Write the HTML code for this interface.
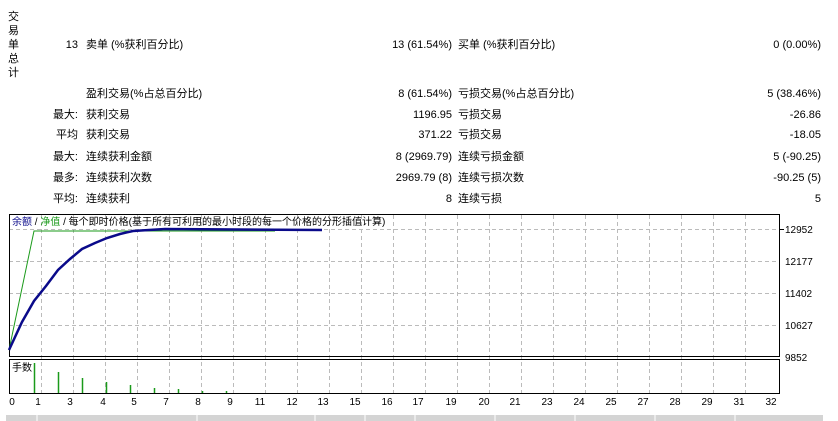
<!DOCTYPE html>
<html><head><meta charset="utf-8"><style>
body{margin:0;width:838px;height:421px;background:#fff;font-family:"Liberation Sans","Noto Sans CJK SC",sans-serif;font-size:11px;color:#000;position:relative;overflow:hidden}
.t{position:absolute;white-space:nowrap;line-height:13px}
.r{text-align:right}
</style></head><body>
<div class="t" style="left:8px;top:10px;width:12px;line-height:14px;font-size:11px">交<br>易<br>单<br>总<br>计</div>

<div class="t r" style="right:760px;top:39px">13</div>
<div class="t" style="left:86px;top:39px">卖单 (%获利百分比)</div>
<div class="t r" style="right:386px;top:39px">13 (61.54%)</div>
<div class="t" style="left:458px;top:39px">买单 (%获利百分比)</div>
<div class="t r" style="right:17px;top:39px">0 (0.00%)</div>

<div class="t" style="left:86px;top:88px">盈利交易(%占总百分比)</div>
<div class="t r" style="right:386px;top:88px">8 (61.54%)</div>
<div class="t" style="left:458px;top:88px">亏损交易(%占总百分比)</div>
<div class="t r" style="right:17px;top:88px">5 (38.46%)</div>

<div class="t r" style="right:760px;top:109px">最大:</div>
<div class="t" style="left:86px;top:109px">获利交易</div>
<div class="t r" style="right:386px;top:109px">1196.95</div>
<div class="t" style="left:458px;top:109px">亏损交易</div>
<div class="t r" style="right:17px;top:109px">-26.86</div>

<div class="t r" style="right:760px;top:129px">平均</div>
<div class="t" style="left:86px;top:129px">获利交易</div>
<div class="t r" style="right:386px;top:129px">371.22</div>
<div class="t" style="left:458px;top:129px">亏损交易</div>
<div class="t r" style="right:17px;top:129px">-18.05</div>

<div class="t r" style="right:760px;top:151px">最大:</div>
<div class="t" style="left:86px;top:151px">连续获利金额</div>
<div class="t r" style="right:386px;top:151px">8 (2969.79)</div>
<div class="t" style="left:458px;top:151px">连续亏损金额</div>
<div class="t r" style="right:17px;top:151px">5 (-90.25)</div>

<div class="t r" style="right:760px;top:172px">最多:</div>
<div class="t" style="left:86px;top:172px">连续获利次数</div>
<div class="t r" style="right:386px;top:172px">2969.79 (8)</div>
<div class="t" style="left:458px;top:172px">连续亏损次数</div>
<div class="t r" style="right:17px;top:172px">-90.25 (5)</div>

<div class="t r" style="right:760px;top:193px">平均:</div>
<div class="t" style="left:86px;top:193px">连续获利</div>
<div class="t r" style="right:386px;top:193px">8</div>
<div class="t" style="left:458px;top:193px">连续亏损</div>
<div class="t r" style="right:17px;top:193px">5</div>

<svg style="position:absolute;left:0;top:0" width="838" height="421">
<g stroke="#bbb" stroke-dasharray="4,3" stroke-width="1">
<line x1="9" y1="229.5" x2="779" y2="229.5"/><line x1="9" y1="261.5" x2="779" y2="261.5"/><line x1="9" y1="293.5" x2="779" y2="293.5"/><line x1="9" y1="325.5" x2="779" y2="325.5"/>
<g id="v">
<line x1="41.5" y1="215" x2="41.5" y2="393"/><line x1="73.5" y1="215" x2="73.5" y2="393"/><line x1="105.5" y1="215" x2="105.5" y2="393"/><line x1="137.5" y1="215" x2="137.5" y2="393"/><line x1="169.5" y1="215" x2="169.5" y2="393"/><line x1="201.5" y1="215" x2="201.5" y2="393"/><line x1="233.5" y1="215" x2="233.5" y2="393"/><line x1="265.5" y1="215" x2="265.5" y2="393"/><line x1="297.5" y1="215" x2="297.5" y2="393"/><line x1="329.5" y1="215" x2="329.5" y2="393"/><line x1="361.5" y1="215" x2="361.5" y2="393"/><line x1="393.5" y1="215" x2="393.5" y2="393"/><line x1="425.5" y1="215" x2="425.5" y2="393"/><line x1="457.5" y1="215" x2="457.5" y2="393"/><line x1="489.5" y1="215" x2="489.5" y2="393"/><line x1="521.5" y1="215" x2="521.5" y2="393"/><line x1="553.5" y1="215" x2="553.5" y2="393"/><line x1="585.5" y1="215" x2="585.5" y2="393"/><line x1="617.5" y1="215" x2="617.5" y2="393"/><line x1="649.5" y1="215" x2="649.5" y2="393"/><line x1="681.5" y1="215" x2="681.5" y2="393"/><line x1="713.5" y1="215" x2="713.5" y2="393"/><line x1="745.5" y1="215" x2="745.5" y2="393"/>
</g></g>
<rect x="9.5" y="214.5" width="770" height="142" fill="none" stroke="#000"/>
<rect x="9.5" y="359.5" width="770" height="34" fill="none" stroke="#000"/>
<polyline points="9,350 34,231 275,231" fill="none" stroke="#1a9a1a" stroke-width="1"/>
<polyline points="9,350 22,322 34,301 46,286 58,270 70,259 82,249 95,243 107,238 120,234 133,231 165,229 322,230" fill="none" stroke="#0a0a8a" stroke-width="2.5"/>
<g stroke="#1a9a1a" stroke-width="1.5">
<line x1="34.5" y1="363" x2="34.5" y2="393"/><line x1="58.5" y1="372" x2="58.5" y2="393"/><line x1="82.5" y1="378" x2="82.5" y2="393"/><line x1="106.5" y1="382" x2="106.5" y2="393"/><line x1="130.5" y1="385" x2="130.5" y2="393"/><line x1="154.5" y1="388" x2="154.5" y2="393"/><line x1="178.5" y1="389" x2="178.5" y2="393"/><line x1="202.5" y1="391" x2="202.5" y2="393"/><line x1="226.5" y1="391" x2="226.5" y2="393"/>
</g>
<g fill="#000" font-size="10" font-family="Liberation Sans, sans-serif">
<line x1="780" y1="229.5" x2="784" y2="229.5" stroke="#000"/>
<text x="785" y="233">12952</text><text x="785" y="265">12177</text><text x="785" y="297">11402</text><text x="785" y="329">10627</text><text x="785" y="361">9852</text>
</g>
<g fill="#000" font-size="10" font-family="Liberation Sans, sans-serif" text-anchor="middle">
<text x="12" y="405">0</text><text x="38" y="405">1</text><text x="70" y="405">3</text><text x="103" y="405">4</text><text x="134" y="405">5</text><text x="166" y="405">7</text><text x="198" y="405">8</text><text x="230" y="405">9</text><text x="260" y="405">11</text><text x="292" y="405">12</text><text x="323" y="405">13</text><text x="355" y="405">15</text><text x="387" y="405">16</text><text x="418" y="405">17</text><text x="451" y="405">19</text><text x="484" y="405">20</text><text x="515" y="405">21</text><text x="547" y="405">23</text><text x="579" y="405">24</text><text x="611" y="405">25</text><text x="643" y="405">27</text><text x="675" y="405">28</text><text x="707" y="405">29</text><text x="739" y="405">31</text><text x="771" y="405">32</text>
</g>
<rect x="6" y="415" width="817" height="6" fill="#d4d4d4"/>
<g stroke="#fff"><line x1="37" y1="415" x2="37" y2="421"/><line x1="197" y1="415" x2="197" y2="421"/><line x1="315" y1="415" x2="315" y2="421"/><line x1="365" y1="415" x2="365" y2="421"/><line x1="415" y1="415" x2="415" y2="421"/><line x1="495" y1="415" x2="495" y2="421"/><line x1="575" y1="415" x2="575" y2="421"/><line x1="655" y1="415" x2="655" y2="421"/><line x1="735" y1="415" x2="735" y2="421"/></g>
</svg>
<div class="t" style="left:12px;top:216px;font-size:10px"><span style="color:#0a0a8a">余额</span> / <span style="color:#1a9a1a">净值</span> / 每个即时价格(基于所有可利用的最小时段的每一个价格的分形插值计算)</div>
<div class="t" style="left:12px;top:362px;font-size:10px">手数</div>
</body></html>
